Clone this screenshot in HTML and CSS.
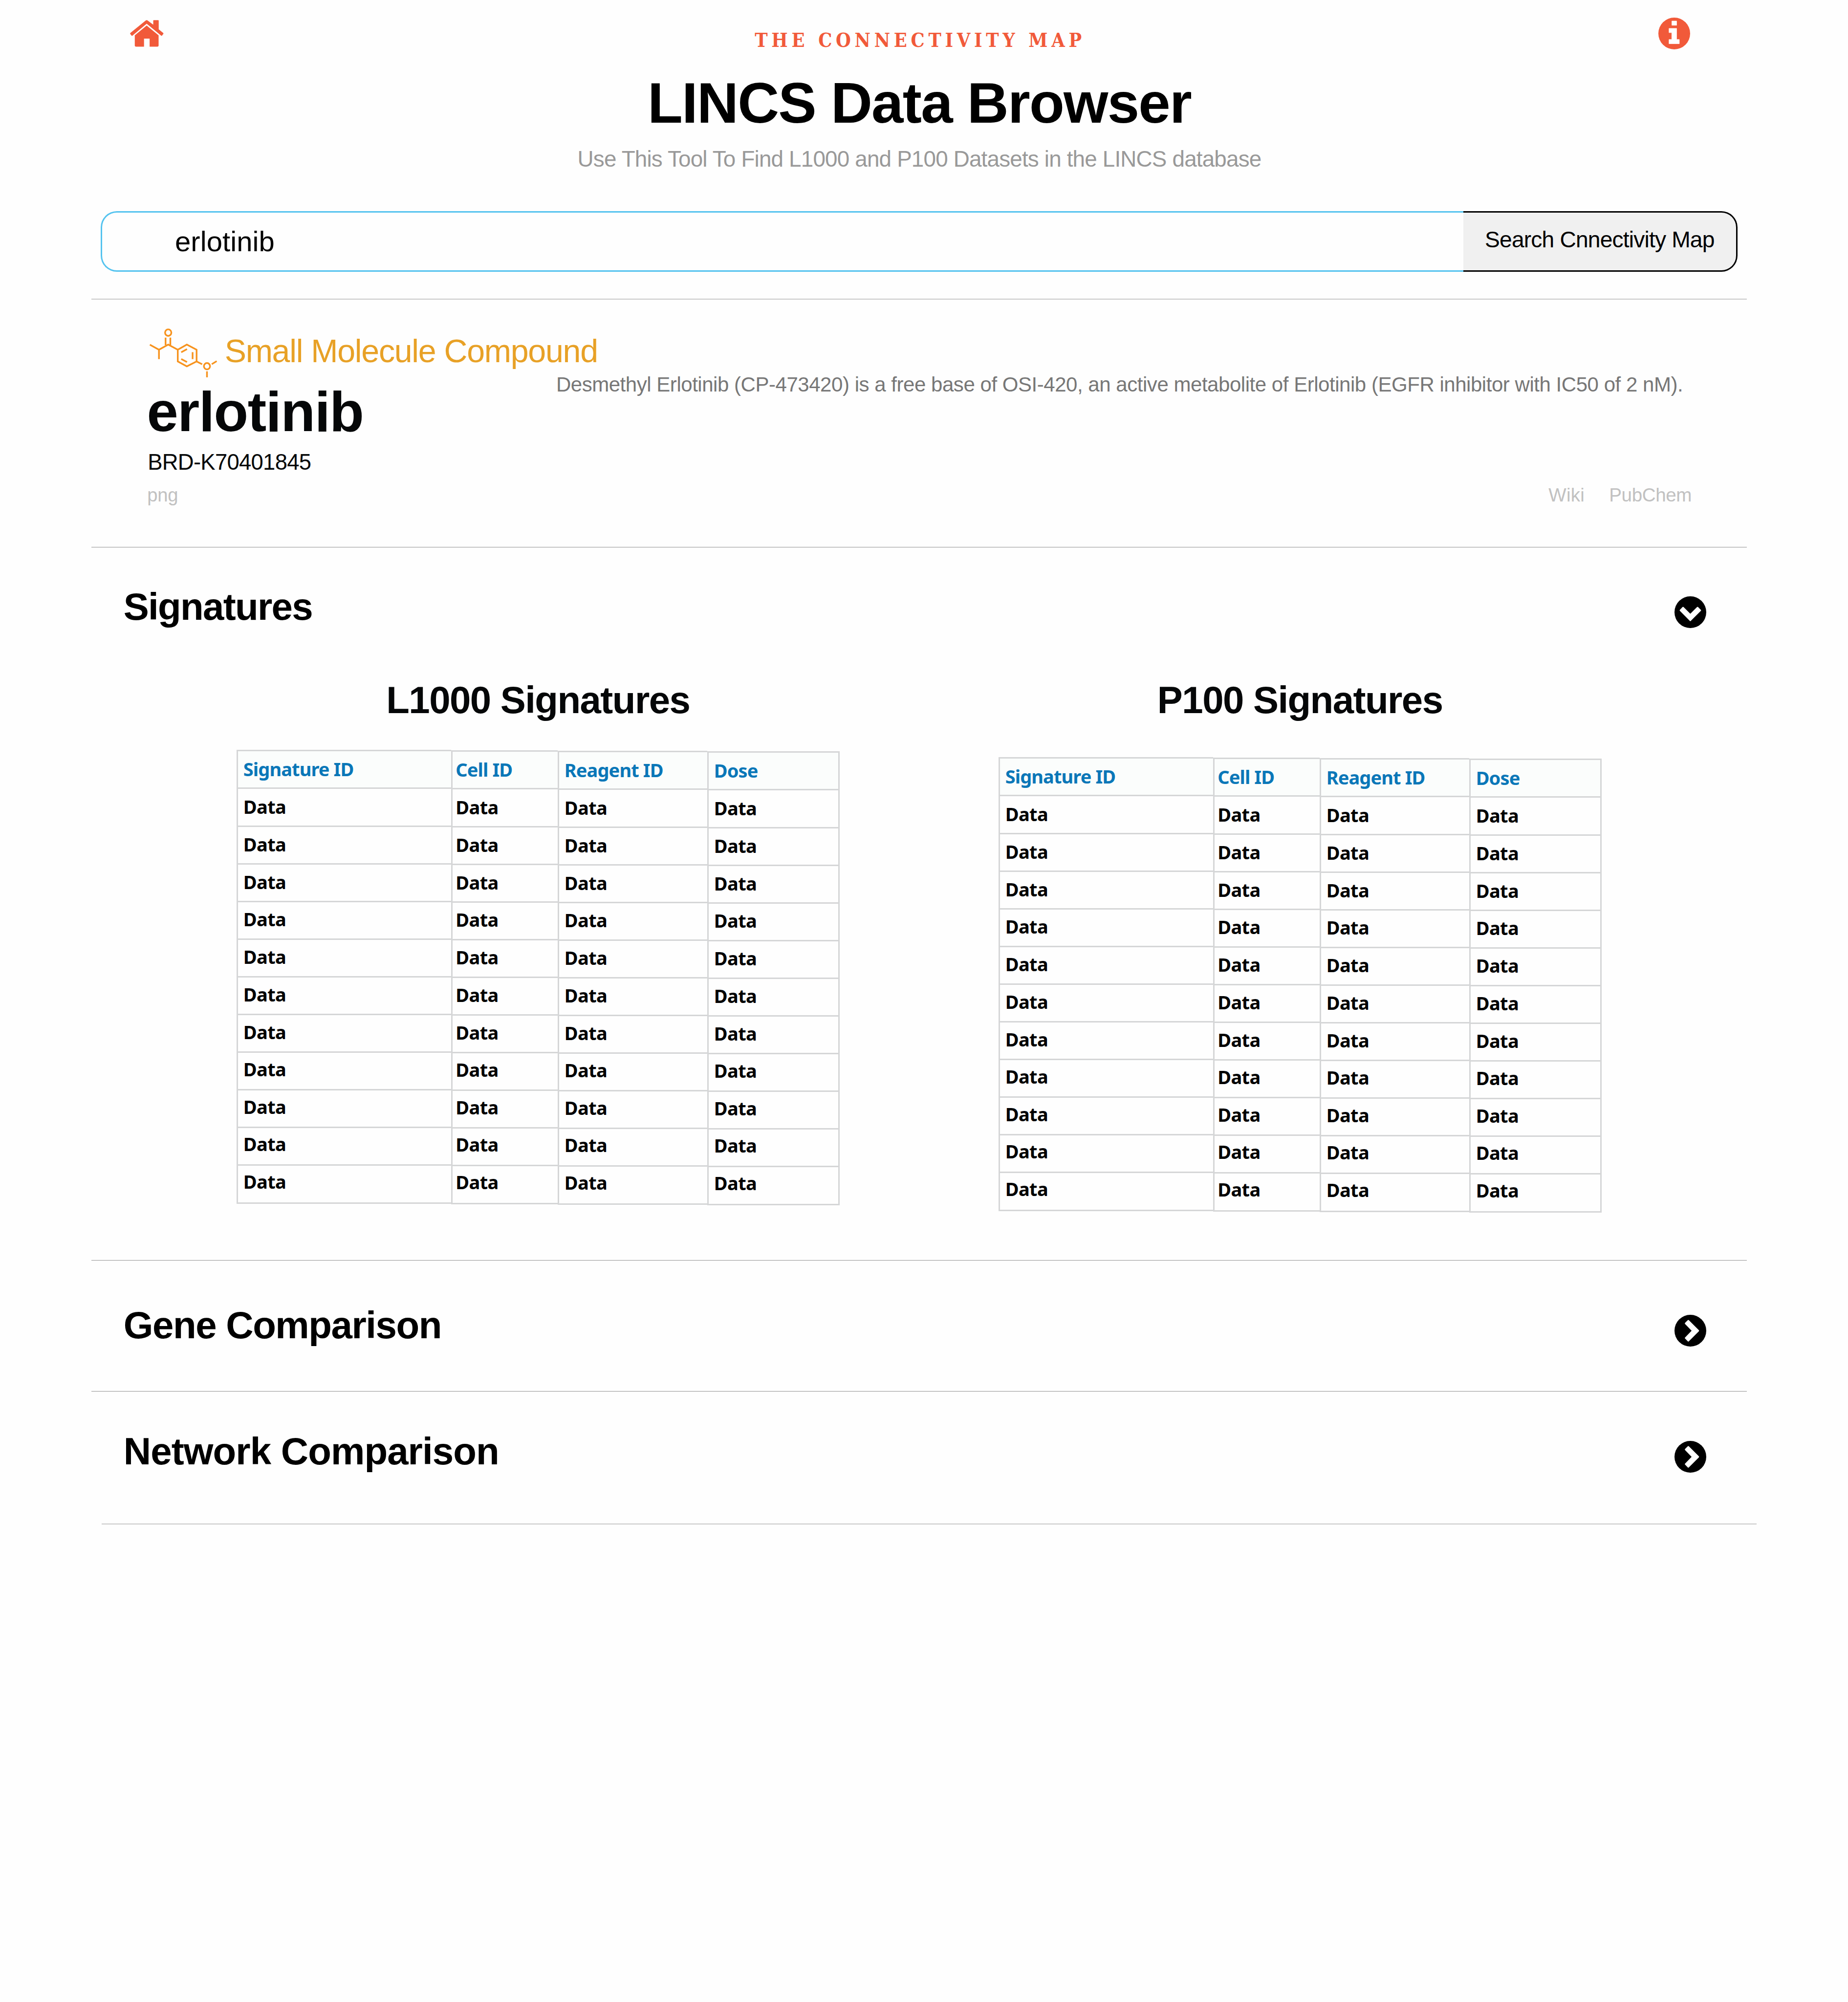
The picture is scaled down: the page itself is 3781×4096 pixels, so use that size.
FILE: index.html
```
<!DOCTYPE html>
<html lang="en">
<head>
<meta charset="utf-8">
<title>LINCS Data Browser</title>
<link rel="stylesheet" href="styles.css">
</head>
<body>
<header class="header">
  <a class="home" aria-label="Home">
    <svg viewBox="0 0 91 72" width="68.8" height="54.4">
      <path d="M42 1.5Q45 -1 48.2 1.5L62.9 12.7V1.6Q62.9 .3 64.4 .3H76.2Q77.7 .3 77.7 1.6V25.3L90 35Q91 36.5 90.2 37.8L86.4 42.3Q85.5 43.2 84.5 42.2L45.1 10L6.5 42.2Q5.2 43.2 4.4 42.3L.6 37.8Q-.3 36.4 .8 35Z"/>
      <path d="M45.1 15L77.4 41.3V69.5Q77 72 74 72H53.1V50.3H37.9V72H16.3Q13.3 72 12.9 69.5V41.3Z"/>
    </svg>
  </a>
  <div class="titles">
    <p class="brand">THE CONNECTIVITY MAP</p>
    <h1 class="title">LINCS Data Browser</h1>
    <p class="subtitle">Use This Tool To Find L1000 and P100 Datasets in the LINCS database</p>
  </div>
  <a class="info" aria-label="Information">
    <svg viewBox="0 0 86 86" width="65" height="65">
      <circle cx="43" cy="43" r="43"/>
      <g class="cutout">
        <path d="M36.5 9.2H49.5V20.9H36.5Z"/>
        <path d="M28.8 29.2H49.5V59.2H56.8V70.8H28.8V59.2H36.2V40.8H28.8Z"/>
      </g>
    </svg>
  </a>
</header>

<form class="search">
  <div class="search-field">erlotinib</div>
  <div class="search-button">Search Cnnectivity Map</div>
</form>

<main class="content">
  <section class="compound">
    <div class="compound-main">
      <div class="kind">
        <svg class="molecule" viewBox="30 24 190 140" width="143.7" height="105.9">
          <ellipse cx="84.4" cy="39.3" rx="8.5" ry="8.8"/>
          <path d="M77.3 52.7V73M90.2 52.7V73"/>
          <path d="M34.8 72L59.4 85.4L84.4 71.6L110.3 85.4M59.4 85.4V110.9"/>
          <path d="M110.3 85.4L134.8 71.6L161.2 85.4V117.1L134.8 130.5L110.3 117.1Z"/>
          <path d="M119.6 92.3L135.3 83.7M150.4 92V110.9M119.6 110.5L135.3 118.8"/>
          <path d="M161.2 117.1L176.3 124.7M202.2 124.7L215.6 116.4M189.3 144V160.1"/>
          <ellipse cx="189.3" cy="130.2" rx="8.3" ry="8.6"/>
        </svg>
        <span class="kind-label">Small Molecule Compound</span>
      </div>
      <h2 class="name">erlotinib</h2>
      <p class="brd">BRD-K70401845</p>
      <a class="png">png</a>
    </div>
    <div class="compound-side">
      <p class="description">Desmethyl Erlotinib (CP-473420) is a free base of OSI-420, an active metabolite of Erlotinib (EGFR inhibitor with IC50 of 2 nM).</p>
      <div class="links"><a class="wiki">Wiki</a><a class="pubchem">PubChem</a></div>
    </div>
  </section>

  <section class="panel signatures">
    <div class="panel-head">
      <h2 class="heading heading-signatures">Signatures</h2>
      <svg class="toggle" viewBox="0 0 86 86" width="65" height="65">
        <circle cx="43" cy="43" r="43"/>
        <path class="chevron" d="M16 38L23.2 30.5L42.8 50L62.4 30.5L70 38L42.8 65.2Z"/>
      </svg>
    </div>
    <div class="tables">
      <div class="dataset dataset-l">
        <h3 class="subheading">L1000 Signatures</h3>
        <div class="table">
          <div class="col col-signature"><div class="th">Signature ID</div><div class="td">Data</div><div class="td">Data</div><div class="td">Data</div><div class="td">Data</div><div class="td">Data</div><div class="td">Data</div><div class="td">Data</div><div class="td">Data</div><div class="td">Data</div><div class="td">Data</div><div class="td">Data</div></div>
          <div class="col col-cell"><div class="th">Cell ID</div><div class="td">Data</div><div class="td">Data</div><div class="td">Data</div><div class="td">Data</div><div class="td">Data</div><div class="td">Data</div><div class="td">Data</div><div class="td">Data</div><div class="td">Data</div><div class="td">Data</div><div class="td">Data</div></div>
          <div class="col col-reagent"><div class="th">Reagent ID</div><div class="td">Data</div><div class="td">Data</div><div class="td">Data</div><div class="td">Data</div><div class="td">Data</div><div class="td">Data</div><div class="td">Data</div><div class="td">Data</div><div class="td">Data</div><div class="td">Data</div><div class="td">Data</div></div>
          <div class="col col-dose"><div class="th">Dose</div><div class="td">Data</div><div class="td">Data</div><div class="td">Data</div><div class="td">Data</div><div class="td">Data</div><div class="td">Data</div><div class="td">Data</div><div class="td">Data</div><div class="td">Data</div><div class="td">Data</div><div class="td">Data</div></div>
        </div>
      </div>
      <div class="dataset dataset-p">
        <h3 class="subheading">P100 Signatures</h3>
        <div class="table">
          <div class="col col-signature"><div class="th">Signature ID</div><div class="td">Data</div><div class="td">Data</div><div class="td">Data</div><div class="td">Data</div><div class="td">Data</div><div class="td">Data</div><div class="td">Data</div><div class="td">Data</div><div class="td">Data</div><div class="td">Data</div><div class="td">Data</div></div>
          <div class="col col-cell"><div class="th">Cell ID</div><div class="td">Data</div><div class="td">Data</div><div class="td">Data</div><div class="td">Data</div><div class="td">Data</div><div class="td">Data</div><div class="td">Data</div><div class="td">Data</div><div class="td">Data</div><div class="td">Data</div><div class="td">Data</div></div>
          <div class="col col-reagent"><div class="th">Reagent ID</div><div class="td">Data</div><div class="td">Data</div><div class="td">Data</div><div class="td">Data</div><div class="td">Data</div><div class="td">Data</div><div class="td">Data</div><div class="td">Data</div><div class="td">Data</div><div class="td">Data</div><div class="td">Data</div></div>
          <div class="col col-dose"><div class="th">Dose</div><div class="td">Data</div><div class="td">Data</div><div class="td">Data</div><div class="td">Data</div><div class="td">Data</div><div class="td">Data</div><div class="td">Data</div><div class="td">Data</div><div class="td">Data</div><div class="td">Data</div><div class="td">Data</div></div>
        </div>
      </div>
    </div>
  </section>

  <section class="panel gene">
    <div class="panel-head">
      <h2 class="heading heading-gene">Gene Comparison</h2>
      <svg class="toggle" viewBox="0 0 86 86" width="65" height="65">
        <circle cx="43" cy="43" r="43"/>
        <path class="chevron" d="M30 23.4L37.4 16L64.6 43.2L37.4 70.4L30 62.8L49.2 43.2Z"/>
      </svg>
    </div>
  </section>

  <section class="panel network">
    <div class="panel-head">
      <h2 class="heading heading-network">Network Comparison</h2>
      <svg class="toggle" viewBox="0 0 86 86" width="65" height="65">
        <circle cx="43" cy="43" r="43"/>
        <path class="chevron" d="M30 23.4L37.4 16L64.6 43.2L37.4 70.4L30 62.8L49.2 43.2Z"/>
      </svg>
    </div>
  </section>
  <hr class="end-rule">
</main>
</body>
</html>
```

FILE: styles.css
```
* { box-sizing: border-box; }
body {
  margin: 0;
  width: 3781px;
  height: 4096px;
  overflow: hidden;
  background: #fefefe;
  color: #000;
  font-family: "Liberation Sans", Arial, sans-serif;
}
h1, h2, h3, p { margin: 0; white-space: nowrap; }
svg { display: block; flex: none; overflow: visible; }

/* Header */
.header {
  display: flex;
  align-items: flex-start;
  height: 431.5px;
  padding: 0 323px 0 266.2px;
}
.home { padding-top: 40.8px; fill: #f15a3a; }
.info { padding-top: 35.5px; fill: #f15a3a; }
.cutout { fill: #fff; stroke: #fff; stroke-width: 1; stroke-linejoin: round; }
.titles { flex: 1; padding: 52.2px 0 0 34px; text-align: center; }
.brand {
  padding-left: 3px;
  font: bold 39.4px/60px "DejaVu Serif Condensed", "DejaVu Serif", serif;
  letter-spacing: 7.7px;
  color: #f15a3a;
}
.title { margin-top: 34.3px; font-size: 117.6px; line-height: 130px; letter-spacing: -1.75px; }
.subtitle { margin-top: 19.6px; font-size: 45.8px; line-height: 60px; letter-spacing: -.82px; color: #999; }

/* Search */
.search { display: flex; width: 3349.5px; height: 124.5px; margin: 0 0 55px 205.5px; }
.search-field, .search-button { display: flex; align-items: center; white-space: nowrap; }
.search-field {
  width: 2788px;
  padding-left: 149.4px;
  border: 3px solid #54c3ef;
  border-right: 0;
  border-radius: 33px 0 0 33px;
  font-size: 58px;
  letter-spacing: .1px;
}
.search-button {
  flex: 1;
  padding: 0 0 8.5px 44.6px;
  border: 3px solid #000;
  border-left: 0;
  border-radius: 0 33px 33px 0;
  background: #f0f0f0;
  font-size: 46.2px;
  letter-spacing: -.83px;
}

/* Content */
.content { width: 3387px; margin-left: 187px; border-top: 2px solid #cacaca; }

.compound {
  display: flex;
  height: 507px;
  padding: 55.5px 113px 0 113.5px;
  border-bottom: 1px solid #919191;
}
.compound-main { width: 837.4px; flex: none; }
.kind { display: flex; align-items: flex-start; gap: 13.5px; height: 105.9px; padding-left: 2px; }
.molecule { fill: none; stroke: #f7931e; stroke-width: 4.5; }
.kind-label { font-size: 66.3px; line-height: 99px; letter-spacing: -1.27px; color: #e8a126; white-space: nowrap; }
.name { margin-top: 12.2px; font-size: 115.5px; line-height: 110px; letter-spacing: -1.4px; color: #050708; }
.brd { margin-top: 24px; padding-left: 1.7px; font-size: 45.4px; line-height: 50px; letter-spacing: -.7px; color: #050708; }
.png { display: block; margin-top: 19.5px; padding-left: .8px; font-size: 38.2px; line-height: 46px; letter-spacing: -.3px; color: #c1c1c1; }
.compound-side { flex: 1; padding-top: 93px; }
.description { font-size: 42px; line-height: 50px; letter-spacing: -.464px; color: #777; }
.links {
  display: flex;
  justify-content: flex-end;
  gap: 50px;
  margin-top: 178.6px;
  font-size: 38.6px;
  line-height: 46px;
  color: #c1c1c1;
}
.wiki { letter-spacing: .3px; }
.pubchem { letter-spacing: -.4px; }

/* Collapsible panels */
.panel { border-bottom: 1px solid #919191; }
.signatures { height: 1459px; padding-top: 75.8px; }
.gene { height: 268px; padding-top: 86.8px; }
.network { height: 270px; padding-top: 77px; border-bottom: 0; }
.panel-head { display: flex; justify-content: space-between; align-items: flex-start; padding: 0 83.4px 0 65.8px; }
.heading, .subheading { font-size: 78px; line-height: 90px; }
.heading-signatures { letter-spacing: -1.7px; }
.heading-gene { letter-spacing: -1.45px; }
.heading-network { letter-spacing: -.92px; }
.toggle { margin-top: 24.2px; }
.chevron { fill: #fff; stroke: #fff; stroke-width: 4; stroke-linejoin: round; }

/* Signature tables */
.tables { display: flex; gap: 324.9px; padding: 101.6px 0 0 296.8px; }
.dataset { width: 1234px; }
.subheading { text-align: center; letter-spacing: -1.55px; color: #050708; }
.table { display: flex; align-items: flex-start; margin-top: 57px; }
.dataset-p .table { margin-top: 72px; }
.col { border-left: 3px solid #d5d6d7; border-bottom: 3px solid #d5d6d7; font: bold 38px/52px "Noto Sans", "Open Sans", sans-serif; }
.col-signature { width: 439px; }
.col-cell { width: 218px; margin-top: 1px; }
.col-reagent { width: 306px; margin-top: 2px; }
.col-dose { width: 271px; margin-top: 3px; border-right: 3px solid #d5d6d7; }
.th, .td { height: 77.1px; padding: 10px 0 0 11px; border-top: 3px solid #d5d6d7; letter-spacing: -.6px; white-space: nowrap; }
.col-cell .th, .col-cell .td { padding-left: 6.5px; }
.th { padding-top: 9.6px; background: #fbfdfc; color: #0a77b8; letter-spacing: -.9px; }
.td:nth-child(n+3) { padding-top: 9.2px; }
.td:nth-child(n+5) { padding-top: 8.4px; }
.td:nth-child(n+7) { padding-top: 7.6px; }
.td:nth-child(n+9) { padding-top: 6.8px; }
.td:nth-child(n+11) { padding-top: 5.8px; }

.end-rule { width: 3386px; margin: 0 0 0 21px; border: 0; border-top: 2px solid #cacaca; }
```
